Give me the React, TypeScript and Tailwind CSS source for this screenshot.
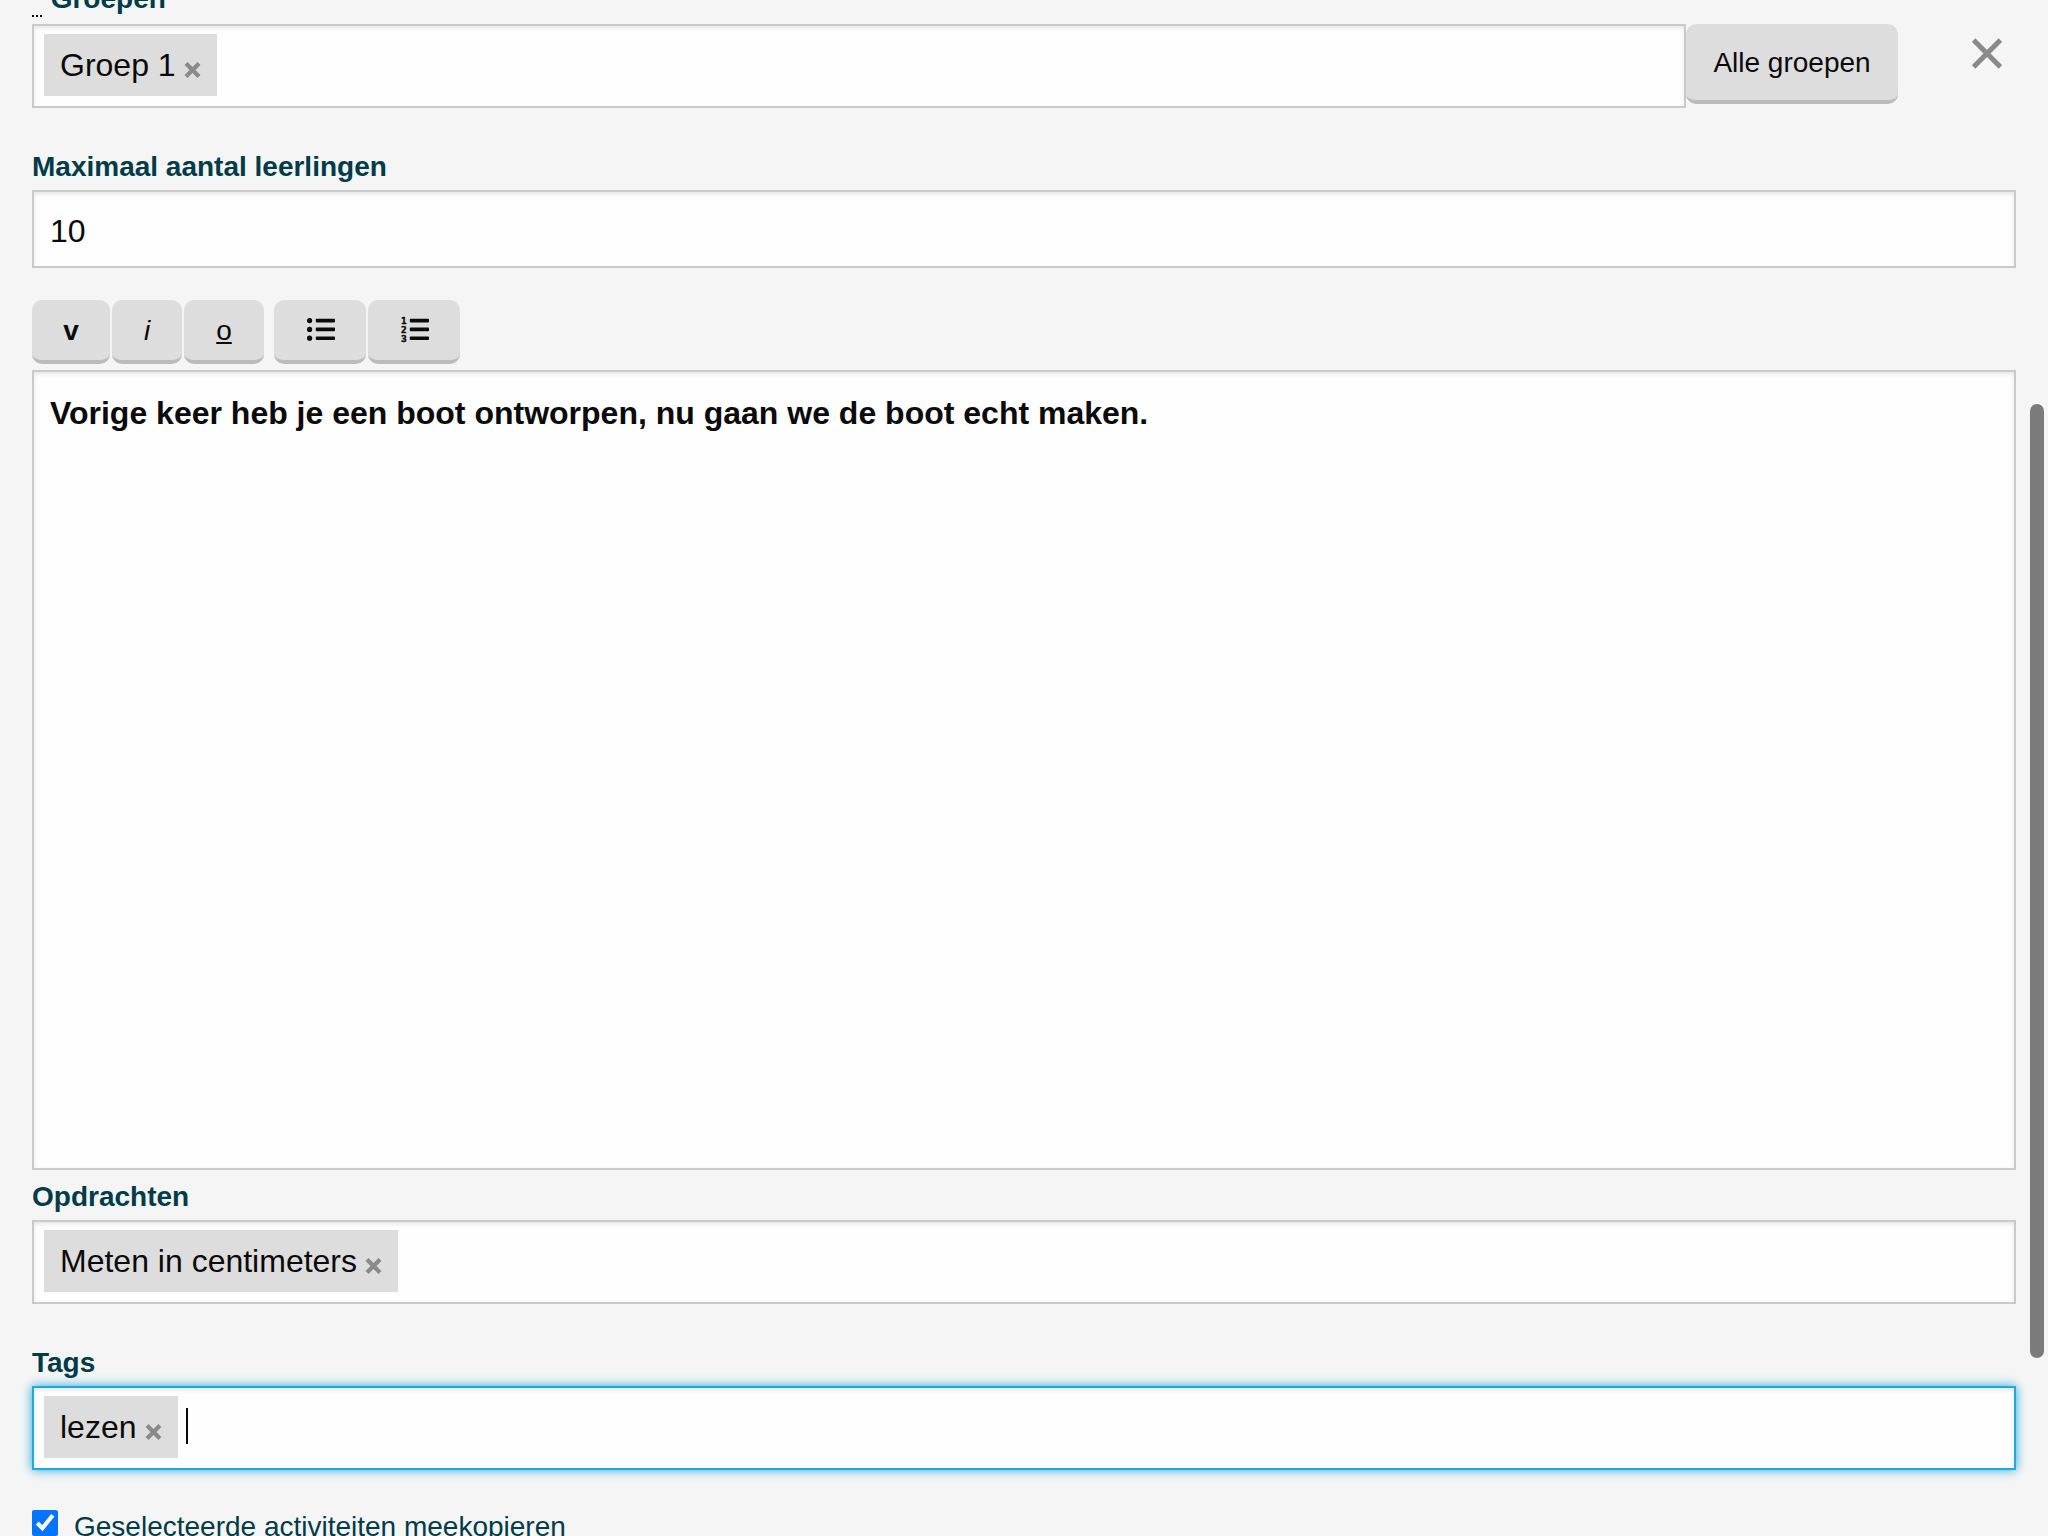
import React, { useState } from 'react';

const fieldBox = 'border-2 bg-[#fefefe] shadow-[inset_0_2px_4px_rgba(10,10,10,0.1)] border-[#cacaca]';
const focusBox = 'border-2 bg-[#fefefe] shadow-[inset_0_2px_4px_rgba(10,10,10,0.1),0_0_10px_#1fa9dd] border-[#1fa9dd]';
const labelText = 'block pt-1 leading-[46px] text-[28px] font-bold text-[#003b49]';
const grayButton = 'rounded-[10px] border-b-4 border-[#bbb] bg-[#ddd] text-[28px]';
const toolButton = 'h-16 pt-0.5';

function Tag({ name }: { name: string }) {
  return (
    <span className="flex items-center bg-[#ddd] px-4 text-[32px] leading-[62px] whitespace-nowrap">
      {name}
      <button type="button" aria-label={`Verwijder ${name}`} className="mt-[10px] ml-2 cursor-pointer">
        <svg width="17" height="16" viewBox="0 0 17 16" stroke="#8a8a8a" strokeWidth="4.2">
          <path d="M2 1.5l13 13M15 1.5l-13 13" />
        </svg>
      </button>
    </span>
  );
}

function TagField({ id, tags, focused = false }: { id: string; tags: string[]; focused?: boolean }) {
  return (
    <div className={`flex w-full gap-2 px-[10px] pt-2 pb-[10px] ${focused ? focusBox : fieldBox}`}>
      {tags.map(tag => (
        <Tag key={tag} name={tag} />
      ))}
      {focused && <span className="mt-3 h-9 w-0.5 bg-[#0a0a0a]" />}
      <input id={id} type="text" className="min-w-0 flex-1 bg-transparent text-[32px] outline-none" />
    </div>
  );
}

function BulletListIcon() {
  return (
    <svg width="28" height="26" viewBox="0 0 28 26" fill="#0a0a0a">
      {[3.6, 12.4, 21.2].map(y => (
        <g key={y}>
          <circle cx="2.6" cy={y} r="2.6" />
          <rect x="8.8" y={y - 1.8} width="19.2" height="3.6" rx="0.8" />
        </g>
      ))}
    </svg>
  );
}

function NumberListIcon() {
  return (
    <svg width="28" height="26" viewBox="0 0 28 26" fill="#0a0a0a" className="overflow-visible">
      {[3.6, 12.4, 21.2].map((y, index) => (
        <g key={y}>
          <text
            x="0"
            y={y + 3.4}
            fontFamily="DejaVu Sans Mono, monospace"
            fontSize="9.5"
            fontWeight="700"
            stroke="#0a0a0a"
            strokeWidth="0.4"
          >
            {index + 1}
          </text>
          <rect x="8.8" y={y - 1.8} width="19.2" height="3.6" rx="0.8" />
        </g>
      ))}
    </svg>
  );
}

export default function App() {
  const [max, setMax] = useState('10');
  const [copy, setCopy] = useState(true);

  return (
    <div className="flex h-screen overflow-hidden bg-[#f5f5f5] font-['Liberation_Sans',Arial,sans-serif] text-[#0a0a0a]">
      <form className="min-w-0 flex-1 pl-8">
        {/* Groepen */}
        <label htmlFor="groepen" className={`-mt-7 pb-0.5 ${labelText}`}>
          <abbr title="verplicht" className="text-[#0a0a0a] underline decoration-dotted decoration-2 underline-offset-[7px]">*</abbr> Groepen
        </label>
        <div className="mb-8 flex items-start">
          <div className="min-w-0 flex-1">
            <TagField id="groepen" tags={['Groep 1']} />
          </div>
          <button type="button" className={`h-20 w-[212px] pt-0.5 ${grayButton}`}>
            Alle groepen
          </button>
          <button type="button" aria-label="Sluiten" className="mt-[14px] mr-[14px] ml-[74px] cursor-pointer">
            <svg width="30" height="31" viewBox="0 0 30 31" stroke="#8a8a8a" strokeWidth="5">
              <path d="M1.6 2.1l26.8 26.8M28.4 2.1l-26.8 26.8" />
            </svg>
          </button>
        </div>

        <label htmlFor="max" className={labelText}>Maximaal aantal leerlingen</label>
        <input
          id="max"
          type="text"
          value={max}
          onChange={e => setMax(e.target.value)}
          className={`mb-8 block h-[78px] w-full px-4 pt-1 text-[32px] outline-none ${fieldBox}`}
        />

        {/* Editor */}
        <div className="mb-1.5 flex gap-0.5">
          <button type="button" aria-label="Vet" className={`w-[78px] font-bold ${toolButton} ${grayButton}`}>v</button>
          <button type="button" aria-label="Cursief" className={`w-[70px] italic ${toolButton} ${grayButton}`}>i</button>
          <button type="button" aria-label="Onderstreept" className={`mr-2 w-20 underline decoration-2 underline-offset-2 ${toolButton} ${grayButton}`}>o</button>
          <button type="button" aria-label="Opsomming" className={`flex w-[92px] items-center justify-center pl-0.5 ${grayButton}`}>
            <BulletListIcon />
          </button>
          <button type="button" aria-label="Genummerde lijst" className={`flex w-[92px] items-center justify-center pl-0.5 ${grayButton}`}>
            <NumberListIcon />
          </button>
        </div>
        <div
          role="textbox"
          aria-multiline="true"
          aria-label="Beschrijving"
          contentEditable
          suppressContentEditableWarning
          className={`h-[800px] px-4 pt-4 text-[32px] leading-[50px] outline-none ${fieldBox}`}
        >
          <strong className="font-bold">Vorige keer heb je een boot ontworpen, nu gaan we de boot echt maken.</strong>
        </div>

        <label htmlFor="opdrachten" className={labelText}>Opdrachten</label>
        <div className="mb-8">
          <TagField id="opdrachten" tags={['Meten in centimeters']} />
        </div>

        <label htmlFor="tags" className={labelText}>Tags</label>
        <TagField id="tags" tags={['lezen']} focused />

        <div className="mt-8 flex items-start pt-2">
          <input
            id="meekopieren"
            type="checkbox"
            checked={copy}
            onChange={e => setCopy(e.target.checked)}
            className="size-[26px]"
          />
          <label htmlFor="meekopieren" className="pl-4 text-[28px] leading-[34px] text-[#003b49]">
            Geselecteerde activiteiten meekopieren
          </label>
        </div>
      </form>

      {/* Schuifbalk */}
      <div className="w-8 shrink-0 pt-[404px] pl-[14px]">
        <div className="h-[954px] w-[14px] rounded-full bg-[#7b7b7b]" />
      </div>
    </div>
  );
}
